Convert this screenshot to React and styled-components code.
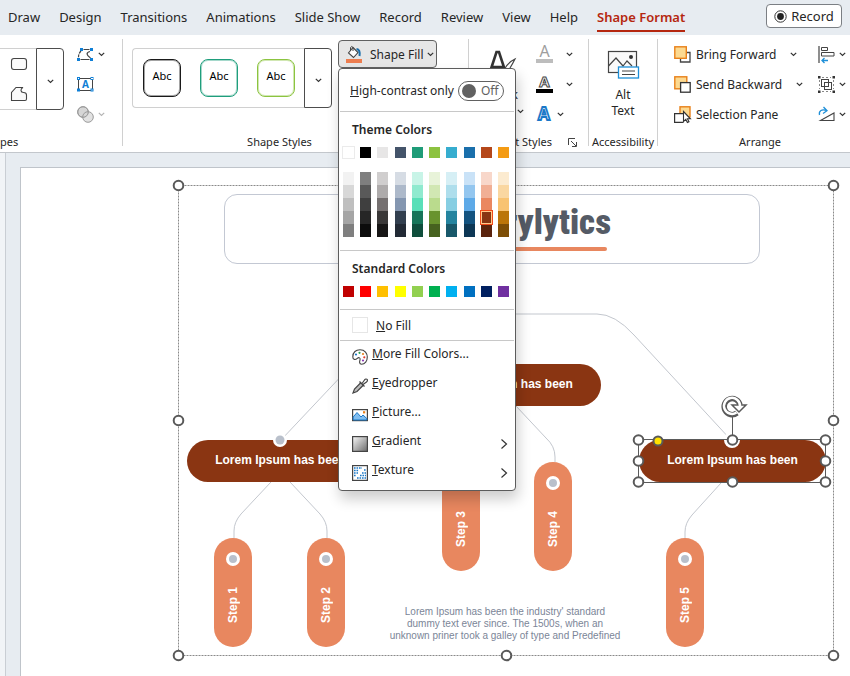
import React, { useState } from 'react';
import styled, { createGlobalStyle } from 'styled-components';

const GlobalStyle = createGlobalStyle`
  * {
    box-sizing: border-box;
  }

  body {
    margin: 0;
    overflow: hidden;
    font-family: 'Noto Sans', 'Open Sans', sans-serif;
    font-size: 12px;
    color: #262626;
  }

  button {
    font: inherit;
    color: inherit;
    padding: 0;
    border: none;
    background: none;
    cursor: pointer;
  }

  svg {
    flex: none;
    overflow: visible;
  }
`;

const Window = styled.div`
  display: flex;
  flex-direction: column;
  min-height: 100vh;
  background: #e7ecf1;
`;

/* ---------- tabs ---------- */

const TabBar = styled.nav`
  display: flex;
  align-items: center;
  gap: 19px;
  height: 35px;
  padding: 0 8px;
`;

const Tab = styled.button`
  height: 28px;
  margin-top: 1px;
  font-size: 13px;
  line-height: 20px;
  white-space: nowrap;
  border-bottom: 2px solid ${(props) => (props.$active ? '#b5270f' : 'transparent')};
  color: ${(props) => (props.$active ? '#b5270f' : '#262626')};
  font-weight: ${(props) => (props.$active ? 600 : 400)};
`;

const RecordButton = styled.button`
  display: flex;
  align-items: center;
  justify-content: center;
  gap: 4px;
  width: 76px;
  height: 24px;
  margin-left: auto;
  margin-bottom: 3px;
  font-size: 13px;
  border: 1px solid #7b7f84;
  border-radius: 4px;
  background: #fff;
`;

/* ---------- ribbon ---------- */

const Ribbon = styled.div`
  display: flex;
  height: 118px;
  padding-top: 4px;
  background: #fff;
  border-bottom: 1px solid #c3c7cc;
  position: relative;
  z-index: 2;
`;

const Group = styled.section`
  display: flex;
  flex-direction: column;
  flex: ${(props) => (props.$width ? `0 0 ${props.$width}px` : '1')};
  margin-bottom: 6px;
  border-right: ${(props) => (props.$width ? '1px solid #d0d0d0' : 'none')};
`;

const GroupBody = styled.div`
  display: flex;
  flex: none;
  align-items: flex-start;
  justify-content: ${(props) => props.$justify || 'flex-start'};
  gap: ${(props) => props.$gap || 0}px;
  height: 90px;
  padding-left: ${(props) => props.$left || 0}px;
`;

const GroupLabel = styled.div`
  display: flex;
  flex: none;
  align-items: center;
  justify-content: ${(props) => props.$justify || 'center'};
  gap: 16px;
  height: 26px;
  padding-left: ${(props) => props.$left || 0}px;
  padding-right: ${(props) => props.$right || 0}px;
  font-size: 11px;
  line-height: 16px;
  white-space: nowrap;
`;

const Gallery = styled.div`
  display: flex;
  align-items: center;
  gap: ${(props) => props.$gap || 0}px;
  height: ${(props) => props.$height}px;
  margin-top: 9px;
  padding: 0 ${(props) => (props.$cut ? 0 : 9)}px 0 10px;
  border: 1px solid #d0d0d0;
  border-right: none;
  border-left-width: ${(props) => (props.$cut ? 0 : 1)}px;
  border-radius: ${(props) => (props.$cut ? 0 : '4px 0 0 4px')};
`;

const ShapeColumn = styled.div`
  display: flex;
  flex-direction: column;
  gap: 15px;
  width: 26px;
`;

const GalleryMore = styled.button`
  width: 28px;
  height: ${(props) => props.$height}px;
  margin-top: 9px;
  border: 1px solid #4d4d4d;
  border-radius: 0 4px 4px 0;
`;

const StyleTile = styled.button`
  width: 38px;
  height: 38px;
  margin-bottom: 1px;
  border: 1px solid ${(props) => props.$color};
  outline: 1px solid ${(props) => props.$color}66;
  outline-offset: -2px;
  border-radius: 8px;
  color: #000;
  font-size: 11px;
  line-height: 32px;
  padding-bottom: 4px;
`;

const IconColumn = styled.div`
  display: flex;
  flex-direction: column;
  padding-left: ${(props) => props.$left || 0}px;
`;

const IconRow = styled.button`
  display: flex;
  align-items: center;
  gap: ${(props) => props.$gap || 4}px;
  height: 30px;
  white-space: nowrap;
`;

const Spacer = styled.span`
  width: 4px;
`;

const FillAnchor = styled.div`
  position: relative;
  margin-left: 6px;
`;

const FillButton = styled.button`
  display: flex;
  align-items: center;
  gap: 7px;
  height: 28px;
  width: 99px;
  margin-top: 1px;
  padding-left: 6px;
  white-space: nowrap;
  background: #e6e6e6;
  border: 1px solid #616161;
  border-radius: 4px;

  span {
    margin-right: -4px;
  }
`;

const TallButton = styled.button`
  display: flex;
  flex-direction: column;
  align-items: center;
  padding-top: 10px;
  line-height: 16px;

  > svg {
    margin-bottom: 8px;
  }
`;

const TallLine = styled.span`
  display: flex;
  align-items: center;
  gap: 4px;
`;

/* ---------- fill menu ---------- */

const Menu = styled.div`
  position: absolute;
  top: 29px;
  left: 0;
  z-index: 5;
  width: 178px;
  padding-bottom: 4px;
  background: #fff;
  border: 1px solid #5c5c5c;
  border-radius: 4px;
  box-shadow: 2px 8px 14px rgba(0, 0, 0, 0.2);
`;

const ContrastRow = styled.div`
  display: flex;
  align-items: center;
  justify-content: space-between;
  height: 42px;
  padding: 1px 11px 0 11px;
  white-space: nowrap;
`;

const Switch = styled.label`
  display: flex;
  align-items: center;
  gap: 5px;
  width: 46px;
  height: 20px;
  padding-left: 3px;
  border: 1px solid #616161;
  border-radius: 10px;
  color: #616161;
`;

const SwitchKnob = styled.input`
  appearance: none;
  width: 14px;
  height: 14px;
  margin: 0;
  border-radius: 50%;
  background: #616161;
`;

const MenuSection = styled.div`
  height: ${(props) => props.$height}px;
  margin: 0 1px;
  padding: 9px 5px 0 3px;
  border-top: 1px solid #c8c8c8;
`;

const MenuHeading = styled.h4`
  margin: 0 0 9px;
  padding-left: 9px;
  font-size: 12px;
  line-height: 17px;
  font-weight: 600;
`;

const Swatches = styled.div`
  display: flex;
  justify-content: space-between;
  margin-bottom: 14px;
`;

const Shades = styled.div`
  display: flex;
  flex-direction: column;
`;

const Swatch = styled.button`
  position: relative;
  display: block;
  width: 11px;
  height: ${(props) => props.$height || 11}px;
  background: ${(props) => props.$color};
  box-shadow: ${(props) => (props.$color === '#ffffff' ? '0 0 0 1px #ebebeb' : 'none')};
  ${(props) =>
    props.$selected &&
    `
    z-index: 1;
    outline: 1px solid #f04a1a;
    box-shadow: inset 0 0 0 1px #ffc98a;
  `}
`;

const NoFill = styled.button`
  display: flex;
  align-items: center;
  gap: 8px;
  width: calc(100% - 2px);
  height: 32px;
  margin: 0 1px;
  padding-left: 12px;
  border-top: 1px solid #c8c8c8;
  border-bottom: 1px solid #c8c8c8;
`;

const EmptyBox = styled.span`
  width: 16px;
  height: 16px;
  border: 1px solid #e6e6e6;
`;

const MenuItem = styled.button`
  display: flex;
  align-items: center;
  gap: 4px;
  width: 100%;
  height: 29px;
  padding: 2px 7px 0 13px;

  span {
    flex: 1;
    padding-bottom: 6px;
    text-align: left;
  }
`;

/* ---------- slide ---------- */

const Workspace = styled.main`
  display: flex;
  flex: 1;
`;

const Rail = styled.div`
  flex: 0 0 6px;
  margin-right: 14px;
  background: #f1f4f7;
  border-right: 1px solid #c9ced4;
`;

const Slide = styled.div`
  flex: 1;
  margin-top: 14px;
  padding: 17px 0 0 157px;
  background: #fff;
  border-top: 1px solid #bfc4ca;
  border-left: 1px solid #bfc4ca;
`;

const Frame = styled.div`
  position: relative;
  width: 656px;
  height: 471px;
  font-family: 'Liberation Sans', Arial, sans-serif;
`;

const Drawing = styled.svg`
  position: absolute;
  top: 0;
  left: 0;
  width: 100%;
  height: 100%;
  pointer-events: none;
`;

const TitleBox = styled.div`
  position: absolute;
  left: 46px;
  top: 9px;
  width: 536px;
  height: 70px;
  padding: 8px 148px 0 0;
  border: 1px solid #c3c8d3;
  border-radius: 13px;
`;

const Title = styled.h1`
  margin: 0;
  color: #555b66;
  font-family: 'Roboto Condensed', Roboto, 'Liberation Sans', sans-serif;
  font-size: 35px;
  line-height: 40px;
  font-weight: 900;
  text-align: right;
`;

const Underline = styled.div`
  width: 230px;
  height: 4px;
  margin: 4px 4px 0 auto;
  border-radius: 2px;
  background: #e8875f;
`;

const Pill = styled.div`
  position: absolute;
  left: ${(props) => props.$x}px;
  top: ${(props) => props.$y}px;
  display: flex;
  align-items: center;
  justify-content: center;
  width: 187px;
  height: 42px;
  padding-bottom: 3px;
  border-radius: 21px;
  background: #8a3512;
  color: #fff;
  font-size: 12px;
  font-weight: 700;
  white-space: nowrap;
`;

const Step = styled.div`
  position: absolute;
  left: ${(props) => props.$x}px;
  top: ${(props) => props.$y}px;
  display: flex;
  flex-direction: column;
  align-items: center;
  justify-content: space-between;
  width: 38px;
  height: 109px;
  padding: 14px 0 24px;
  border-radius: 19px;
  background: #e8875f;
`;

const Dot = styled.span`
  width: 14px;
  height: 14px;
  border: 3px solid #fff;
  border-radius: 50%;
  background: #b9c0cb;
`;

const StepLabel = styled.span`
  writing-mode: vertical-rl;
  transform: rotate(180deg);
  color: #fff;
  font-size: 12px;
  line-height: 14px;
  font-weight: 700;
`;

const Caption = styled.p`
  position: absolute;
  left: 202px;
  top: 421px;
  width: 250px;
  margin: 0;
  color: #7b8597;
  font-size: 10px;
  line-height: 12px;
  text-align: center;
`;

/* ---------- data ---------- */

const tabs = ['Draw', 'Design', 'Transitions', 'Animations', 'Slide Show', 'Record', 'Review', 'View', 'Help', 'Shape Format'];

const styleTiles = ['#1a1a1a', '#1f9e7c', '#8cc440'];

const themeColors = ['#ffffff', '#000000', '#e7e6e6', '#44546a', '#1f9c78', '#8cc240', '#36adcf', '#1a6fab', '#b5471a', '#f49b13'];

const shades = [
  ['#f2f2f2', '#d8d8d8', '#bfbfbf', '#a5a5a5', '#7f7f7f'],
  ['#7f7f7f', '#595959', '#3f3f3f', '#262626', '#0c0c0c'],
  ['#d0cece', '#aeabab', '#757070', '#3a3838', '#171616'],
  ['#d6dce4', '#adb9ca', '#8496b0', '#323f4f', '#222a35'],
  ['#c8f4e7', '#90eacf', '#59dfb8', '#177559', '#0f4e3c'],
  ['#e8f3d9', '#d1e7b3', '#badb8d', '#69932e', '#46621f'],
  ['#d6eff5', '#aedeec', '#86cee2', '#24849f', '#18586a'],
  ['#c9e2f7', '#93c6ef', '#5da9e7', '#135380', '#0d3755'],
  ['#f8d7ca', '#f1af95', '#ea8760', '#873513', '#5a230d'],
  ['#fcebd0', '#fad7a1', '#f8c372', '#bb7509', '#7d4e06'],
];

const standardColors = ['#c00000', '#ff0000', '#ffc000', '#ffff00', '#92d050', '#00b050', '#00b0f0', '#0070c0', '#002060', '#7030a0'];

const pills = [
  { x: 9, y: 255 },
  { x: 236, y: 179 },
  { x: 461, y: 255 },
];

const steps = [
  { name: 'Step 1', x: 36, y: 353 },
  { name: 'Step 2', x: 129, y: 353 },
  { name: 'Step 3', x: 264, y: 277 },
  { name: 'Step 4', x: 356, y: 277 },
  { name: 'Step 5', x: 488, y: 353 },
];

const connectors = [
  'M103 255 L202 150 Q222 129 242 129 H419 Q437 129 456 150 L553 255',
  'M93 297 L63 329 Q56 337 56 346 V353',
  'M112 297 L142 329 Q149 337 149 346 V353',
  'M320 221 L290 252 Q283 260 283 270 V277',
  'M338 221 L368 253 Q377 261 377 272 V277',
  'M543 298 L514 330 Q507 338 507 347 V353',
];

const frameHandles = [[0, 0], [655, 0], [0, 235], [655, 235], [0, 470], [328, 470], [655, 470]];
const shapeHandles = [[460, 255], [554, 255], [647, 255], [460, 276], [647, 276], [460, 297], [554, 297], [647, 297]];

/* ---------- icons ---------- */

const Chevron = ({ color = '#333' }) => (
  <svg width="7" height="5" viewBox="0 0 7 5" fill="none" stroke={color} strokeWidth="1.2">
    <path d="M0.8 0.8 L3.5 3.5 L6.2 0.8" />
  </svg>
);

const RoundRectIcon = () => (
  <svg width="18" height="14" viewBox="0 0 18 14" fill="#fafafa" stroke="#444" strokeWidth="1.1">
    <rect x="1.5" y="1.5" width="15" height="11" rx="2.5" />
  </svg>
);

const FreeformIcon = () => (
  <svg width="18" height="16" viewBox="0 0 18 16" fill="#fafafa" stroke="#444" strokeWidth="1.1">
    <path d="M1.5 14.5 V6.5 L6 1.5 H13 C10 3 10.5 6.5 13.5 6.5 C15.5 6.5 16.5 7.5 16.5 9 V13 Q16.5 14.5 15 14.5 Z" />
  </svg>
);

const EditShapeIcon = () => (
  <svg width="17" height="15" viewBox="0 0 17 15" fill="none">
    <path d="M6.5 2.5 H12.5 M3.5 12.5 H12.5" stroke="#444" strokeWidth="1.2" />
    <path d="M4 4 C2 6 1.5 8 1.5 10.5" stroke="#444" strokeWidth="1.2" strokeDasharray="3 1" />
    <path d="M13 4.5 C9 5.5 9 8 13.5 11" stroke="#444" strokeWidth="1.2" />
    <path d="M3 1h3v3h-3zM13 1h3v3h-3zM0 11h3v3h-3zM13 11h3v3h-3z" fill="#0f7fd6" />
  </svg>
);

const TextBoxIcon = () => (
  <svg width="17" height="15" viewBox="0 0 17 15" fill="none">
    <rect x="1.5" y="1.5" width="14" height="12" stroke="#444" />
    <text x="8.5" y="11" textAnchor="middle" fontSize="10" fontWeight="700" fill="#0f7fd6">A</text>
    <g fill="#fff" stroke="#0f7fd6">
      <rect x="0.5" y="0.5" width="2" height="2" />
      <rect x="14" y="0.5" width="2" height="2" />
      <rect x="0.5" y="12" width="2" height="2" />
      <rect x="14" y="12" width="2" height="2" />
    </g>
  </svg>
);

const MergeIcon = () => (
  <svg width="17" height="17" viewBox="0 0 17 17" fill="#d6d6d6" stroke="#9b9b9b">
    <circle cx="6" cy="6" r="5.3" />
    <circle cx="11" cy="11" r="5.3" fillOpacity="0.7" />
    <circle cx="6" cy="6" r="5.3" fill="none" />
  </svg>
);

const BucketIcon = () => (
  <svg width="18" height="18" viewBox="0 0 18 18" fill="none">
    <path d="M8 2.5 L13 7.5 L8.5 12.5 L3.5 8 Z" fill="#fff" stroke="#444" strokeWidth="1.1" />
    <path d="M5.5 6 V2.5 Q6.8 0.5 8 2.5 V6" stroke="#444" />
    <path d="M11.5 4 Q15.5 4.5 14.5 11" stroke="#1a6fab" strokeWidth="2" />
    <rect x="1" y="14" width="16" height="4" fill="#ed7d4f" />
  </svg>
);

const QuickStyleIcon = () => (
  <svg width="30" height="30" viewBox="0 0 30 30" fill="none">
    <path d="M2 26 L9.5 3 H12 L19.5 26 M5 18 H16" stroke="#333" strokeWidth="2.6" />
    <path d="M28 10 Q20 14 17 21 Q21 22 23 19 Q26 14 28 10 Z" fill="#fff" stroke="#444" strokeWidth="1.2" />
  </svg>
);

const LetterIcon = ({ kind }) => (
  <svg width="17" height="20" viewBox="0 0 17 20">
    {kind === 'fill' && (
      <>
        <text x="8.5" y="13" textAnchor="middle" fontSize="16" fill="#9e9e9e">A</text>
        <rect x="0" y="15" width="17" height="4" fill="#bdbdbd" />
      </>
    )}
    {kind === 'outline' && (
      <>
        <text x="8.5" y="13" textAnchor="middle" fontSize="15" fontWeight="700" fill="#fff" stroke="#444">A</text>
        <rect x="0" y="15" width="17" height="4" fill="#000" />
      </>
    )}
    {kind === 'effects' && (
      <text x="8" y="16" textAnchor="middle" fontSize="17" fontWeight="700" fill="#fff" stroke="#1a78c8" strokeWidth="1.8">A</text>
    )}
  </svg>
);

const AltTextIcon = () => (
  <svg width="32" height="30" viewBox="0 0 32 30" fill="none">
    <rect x="1.5" y="2.5" width="28" height="21" stroke="#444" strokeWidth="1.2" fill="#fafafa" />
    <path d="M1.5 17 L9 9 L16 17 L20 12 L25 17" stroke="#444" strokeWidth="1.2" />
    <circle cx="24" cy="8" r="2" fill="#333" />
    <rect x="11.5" y="18" width="20" height="11" fill="#fff" stroke="#1e8fd8" strokeWidth="1.3" />
    <path d="M15 22 H28 M15 25.5 H28" stroke="#444" />
  </svg>
);

const BringForwardIcon = () => (
  <svg width="17" height="17" viewBox="0 0 17 17" fill="none">
    <path d="M13 6.5 H16 V16 H6.5 V13" stroke="#444" strokeWidth="1.3" />
    <rect x="0.8" y="0.8" width="11.5" height="11.5" fill="#fcd990" stroke="#e8811a" strokeWidth="1.4" />
  </svg>
);

const SendBackwardIcon = () => (
  <svg width="17" height="17" viewBox="0 0 17 17">
    <rect x="0.8" y="0.8" width="12" height="12" fill="#fcd990" stroke="#e8811a" strokeWidth="1.4" />
    <rect x="6.6" y="6.6" width="9.6" height="9.6" fill="#fff" stroke="#333" strokeWidth="1.3" />
  </svg>
);

const SelectionPaneIcon = () => (
  <svg width="17" height="17" viewBox="0 0 17 17">
    <rect x="6" y="0.8" width="10" height="10" fill="#fcd990" stroke="#e8811a" strokeWidth="1.4" />
    <path d="M9.5 7.6 H0.6 V16.4 H9.5" fill="#fff" stroke="#333" strokeWidth="1.2" />
    <path d="M9.5 5.5 V15.5 L11.8 13.4 L13.4 16.6 L15 15.8 L13.4 12.8 H16.4 Z" fill="#fff" stroke="#333" strokeWidth="1.1" />
  </svg>
);

const AlignIcon = () => (
  <svg width="17" height="17" viewBox="0 0 17 17" fill="none">
    <path d="M1 0 V17" stroke="#444" strokeWidth="1.2" />
    <path d="M3.5 1.5 H9.5 V4.5 H3.5 Z M3.5 6.5 H16 V10 H3.5 Z" stroke="#444" />
    <path d="M10 14.5 H4 M6.5 12 L4 14.5 L6.5 17" stroke="#1e8fd8" strokeWidth="1.3" />
  </svg>
);

const GroupIcon = () => (
  <svg width="17" height="17" viewBox="0 0 17 17" fill="none" stroke="#444">
    <path d="M4 1.5 H13 M4 15.5 H13 M1.5 4 V13 M15.5 4 V13" stroke="#888" strokeDasharray="2 2" />
    <rect x="3.5" y="3.5" width="7" height="7" />
    <rect x="6.5" y="6.5" width="7" height="7" />
    <path d="M0 0h2.5v2.5h-2.5zM14.5 0h2.5v2.5h-2.5zM0 14.5h2.5v2.5h-2.5zM14.5 14.5h2.5v2.5h-2.5z" fill="#333" stroke="none" />
  </svg>
);

const RotateIcon = () => (
  <svg width="17" height="17" viewBox="0 0 17 17" fill="none">
    <path d="M1.5 9 C0.5 4.5 4 3 8.5 4.5 M5.5 1 L9 4.7 L5 7.5" stroke="#1e8fd8" strokeWidth="1.3" />
    <path d="M2.5 14.5 L16 7 V14.5 Z" stroke="#444" strokeWidth="1.1" />
  </svg>
);

const LauncherIcon = () => (
  <svg width="9" height="9" viewBox="0 0 9 9" fill="none" stroke="#444">
    <path d="M0.5 7 V0.5 H7 M3 3 L8 8 M8.5 4 V8.5 H4" />
  </svg>
);

const PaletteIcon = () => (
  <svg width="16" height="16" viewBox="0 0 16 16" fill="none">
    <path d="M0.8 8 C0.8 3 4 0.8 8 0.8 C13 0.8 15.3 4.5 15.3 8 C15.3 12 13 15.2 9.5 15.2 C7 15.2 7.5 12.5 8 11 C8.7 9 7 7.8 5.3 9.3 C3.5 11 0.8 11 0.8 8 Z" stroke="#444" strokeWidth="1.1" />
    <circle cx="4" cy="5.5" r="1.1" fill="#1a78c8" />
    <circle cx="7.5" cy="3.8" r="1.1" fill="#2a9d4b" />
    <circle cx="11" cy="5" r="1.1" fill="#e8811a" />
    <circle cx="12.3" cy="8.3" r="1.1" fill="#e03a2a" />
    <circle cx="11" cy="11.5" r="1.1" fill="#8a3ab5" />
  </svg>
);

const EyedropperIcon = () => (
  <svg width="16" height="16" viewBox="0 0 16 16" fill="none" stroke="#444" strokeWidth="1.2">
    <path d="M9 4.5 L2.5 11 L1 15 L5 13.5 L11.5 7" fill="#bbb" />
    <path d="M10 5.5 L12.5 2 Q14 0.3 15.3 1.5 Q16 2.8 14.5 4 L11 6.5" fill="#fff" />
    <path d="M7.5 3.5 L12.5 8.5" />
  </svg>
);

const PictureIcon = () => (
  <svg width="16" height="16" viewBox="0 0 16 16" fill="none">
    <rect x="0.6" y="2.6" width="14.8" height="11" fill="#fff" stroke="#444" strokeWidth="1.2" />
    <path d="M1.2 10 L5 5.5 L9 10 L11 8 L14.8 11.5 V13 H1.2 Z" fill="#7fbdf0" stroke="#1a78c8" />
    <rect x="11" y="4.2" width="2.2" height="2.2" fill="#e8811a" />
  </svg>
);

const GradientIcon = () => (
  <svg width="16" height="16" viewBox="0 0 16 16">
    <defs>
      <linearGradient id="gray" x1="0" y1="0" x2="1" y2="1">
        <stop offset="0" stopColor="#fafafa" />
        <stop offset="1" stopColor="#6b6b6b" />
      </linearGradient>
    </defs>
    <rect x="0.6" y="0.6" width="14.8" height="14.8" fill="url(#gray)" stroke="#444" strokeWidth="1.2" />
  </svg>
);

const TextureIcon = () => (
  <svg width="16" height="16" viewBox="0 0 16 16">
    <rect x="0.6" y="0.6" width="14.8" height="14.8" fill="#fff" stroke="#444" strokeWidth="1.2" />
    <path
      d="M2 3h8M2 5.5h5M2 8h4M2 10.5h2M12 5h2M10 8h4M8 10.5h6M5 13h9"
      stroke="#1a78c8"
      strokeWidth="1.6"
      strokeDasharray="1.6 0.9"
    />
  </svg>
);

const SubmenuArrow = () => (
  <svg width="8" height="12" viewBox="0 0 8 12" fill="none" stroke="#333" strokeWidth="1.2">
    <path d="M1.5 1.5 L6.5 6 L1.5 10.5" />
  </svg>
);

const menuItems = [
  { key: 'M', rest: 'ore Fill Colors...', icon: <PaletteIcon /> },
  { key: 'E', rest: 'yedropper', icon: <EyedropperIcon /> },
  { key: 'P', rest: 'icture...', icon: <PictureIcon /> },
  { key: 'G', rest: 'radient', icon: <GradientIcon />, submenu: true },
  { key: 'T', rest: 'exture', icon: <TextureIcon />, submenu: true },
];

/* ---------- components ---------- */

const FillMenu = () => {
  const [contrast, setContrast] = useState(false);
  const [selected, setSelected] = useState('#873513');

  return (
    <Menu>
      <ContrastRow>
        <label htmlFor="contrast"><u>H</u>igh-contrast only</label>
        <Switch>
          <SwitchKnob id="contrast" type="checkbox" checked={contrast} onChange={() => setContrast(!contrast)} />
          {contrast ? 'On' : 'Off'}
        </Switch>
      </ContrastRow>
      <MenuSection $height={139}>
        <MenuHeading>Theme Colors</MenuHeading>
        <Swatches>
          {themeColors.map((color) => (
            <Swatch key={color} $color={color} aria-label={color} onClick={() => setSelected(color)} />
          ))}
        </Swatches>
        <Swatches>
          {shades.map((column, i) => (
            <Shades key={i}>
              {column.map((color) => (
                <Swatch
                  key={color}
                  $color={color}
                  $height={13}
                  $selected={color === selected}
                  aria-label={color}
                  onClick={() => setSelected(color)}
                />
              ))}
            </Shades>
          ))}
        </Swatches>
      </MenuSection>
      <MenuSection $height={59}>
        <MenuHeading>Standard Colors</MenuHeading>
        <Swatches>
          {standardColors.map((color) => (
            <Swatch key={color} $color={color} aria-label={color} onClick={() => setSelected(color)} />
          ))}
        </Swatches>
      </MenuSection>
      <NoFill>
        <EmptyBox />
        <span><u>N</u>o Fill</span>
      </NoFill>
      {menuItems.map((item) => (
        <MenuItem key={item.key}>
          {item.icon}
          <span><u>{item.key}</u>{item.rest}</span>
          {item.submenu && <SubmenuArrow />}
        </MenuItem>
      ))}
    </Menu>
  );
};

const Diagram = () => (
  <Frame>
    <TitleBox>
      <Title>rylytics</Title>
      <Underline />
    </TitleBox>
    <Drawing fill="none" stroke="#c3c7ce">
      {connectors.map((d) => (
        <path key={d} d={d} />
      ))}
    </Drawing>
    {pills.map((pill) => (
      <Pill key={pill.x} $x={pill.x} $y={pill.y}>Lorem Ipsum has been</Pill>
    ))}
    {steps.map((step) => (
      <Step key={step.name} $x={step.x} $y={step.y}>
        <Dot />
        <StepLabel>{step.name}</StepLabel>
      </Step>
    ))}
    <Caption>
      Lorem Ipsum has been the industry' standard
      <br />
      dummy text ever since. The 1500s, when an
      <br />
      unknown priner took a galley of type and Predefined
    </Caption>
    <Drawing fill="none">
      <circle cx="102" cy="255" r="7" fill="#fff" />
      <circle cx="102" cy="255" r="4.5" fill="#b9c0cb" />
      <circle cx="554" cy="255" r="8" fill="#fff" />
      <rect x="0.5" y="0.5" width="655" height="470" stroke="#8a8a8a" strokeDasharray="2 1" />
      <path d="M460.5 254.5 H647.5 V297.5 H460.5 Z M554.5 254 V232" stroke="#5a5a5a" />
      <g fill="#fff" stroke="#595959" strokeWidth="2">
        {frameHandles.map(([x, y]) => (
          <circle key={`${x}-${y}`} cx={x + 0.5} cy={y + 0.5} r="4.8" />
        ))}
        {shapeHandles.map(([x, y]) => (
          <circle key={`${x}-${y}`} cx={x + 0.5} cy={y} r="4.8" />
        ))}
        <circle cx="480" cy="256" r="4.5" fill="#ffe100" />
      </g>
      {/* rotation handle */}
      <path d="M559 228 A8 8 0 1 1 562 220" stroke="#595959" strokeWidth="5.5" />
      <path d="M554 220 H568 L561 227 Z" fill="#fff" stroke="#595959" strokeWidth="1.5" />
      <path d="M558.5 227.5 A8 8 0 1 1 562 221" stroke="#fff" strokeWidth="2.5" />
    </Drawing>
  </Frame>
);

const App = () => {
  const [activeTab, setActiveTab] = useState('Shape Format');
  const [menuOpen, setMenuOpen] = useState(true);

  return (
    <Window>
      <GlobalStyle />
      <TabBar>
        {tabs.map((tab) => (
          <Tab key={tab} $active={tab === activeTab} onClick={() => setActiveTab(tab)}>{tab}</Tab>
        ))}
        <RecordButton>
          <svg width="13" height="13" viewBox="0 0 13 13">
            <circle cx="6.5" cy="6.5" r="5.7" fill="none" stroke="#333" />
            <circle cx="6.5" cy="6.5" r="3.4" fill="#222" />
          </svg>
          Record
        </RecordButton>
      </TabBar>

      <Ribbon>
        <Group $width={123}>
          <GroupBody>
            <Gallery $cut $height={62}>
              <ShapeColumn>
                <RoundRectIcon />
                <FreeformIcon />
              </ShapeColumn>
            </Gallery>
            <GalleryMore $height={62} aria-label="More shapes"><Chevron /></GalleryMore>
            <IconColumn $left={13}>
              <IconRow aria-label="Edit shape"><EditShapeIcon /><Chevron /></IconRow>
              <IconRow aria-label="Text box"><TextBoxIcon /></IconRow>
              <IconRow aria-label="Merge shapes"><MergeIcon /><Chevron color="#b5b5b5" /></IconRow>
            </IconColumn>
          </GroupBody>
          <GroupLabel $justify="flex-start">pes</GroupLabel>
        </Group>

        <Group $width={346}>
          <GroupBody $left={9}>
            <Gallery $gap={19} $height={60}>
              {styleTiles.map((color) => (
                <StyleTile key={color} $color={color}>Abc</StyleTile>
              ))}
            </Gallery>
            <GalleryMore $height={60} aria-label="More styles"><Chevron /></GalleryMore>
            <FillAnchor>
              <FillButton onClick={() => setMenuOpen(!menuOpen)}>
                <BucketIcon />
                <span>Shape Fill</span>
                <Chevron />
              </FillButton>
              {menuOpen && <FillMenu />}
            </FillAnchor>
          </GroupBody>
          <GroupLabel $right={32}>Shape Styles</GroupLabel>
        </Group>

        <Group $width={120}>
          <GroupBody $left={11} $gap={12}>
            <TallButton>
              <QuickStyleIcon />
              <span>Quick</span>
              <TallLine>Styles <Chevron /></TallLine>
            </TallButton>
            <IconColumn>
              <IconRow $gap={13} aria-label="Text fill"><LetterIcon kind="fill" /><Chevron /></IconRow>
              <IconRow $gap={13} aria-label="Text outline"><LetterIcon kind="outline" /><Chevron /></IconRow>
              <IconRow aria-label="Text effects"><LetterIcon kind="effects" /><Chevron /></IconRow>
            </IconColumn>
          </GroupBody>
          <GroupLabel $justify="flex-end" $right={11}>WordArt Styles <LauncherIcon /></GroupLabel>
        </Group>

        <Group $width={69}>
          <GroupBody $justify="center">
            <TallButton>
              <AltTextIcon />
              <span>Alt</span>
              <span>Text</span>
            </TallButton>
          </GroupBody>
          <GroupLabel>Accessibility</GroupLabel>
        </Group>

        <Group>
          <GroupBody $left={16} $gap={15}>
            <IconColumn>
              <IconRow $gap={5}><BringForwardIcon />Bring Forward<Spacer /><Chevron /></IconRow>
              <IconRow $gap={5}><SendBackwardIcon />Send Backward<Spacer /><Chevron /></IconRow>
              <IconRow $gap={5}><SelectionPaneIcon />Selection Pane</IconRow>
            </IconColumn>
            <IconColumn>
              <IconRow aria-label="Align"><AlignIcon /><Chevron /></IconRow>
              <IconRow aria-label="Group"><GroupIcon /><Chevron /></IconRow>
              <IconRow aria-label="Rotate"><RotateIcon /><Chevron /></IconRow>
            </IconColumn>
          </GroupBody>
          <GroupLabel $left={12}>Arrange</GroupLabel>
        </Group>
      </Ribbon>

      <Workspace>
        <Rail />
        <Slide>
          <Diagram />
        </Slide>
      </Workspace>
    </Window>
  );
};

export default App;
